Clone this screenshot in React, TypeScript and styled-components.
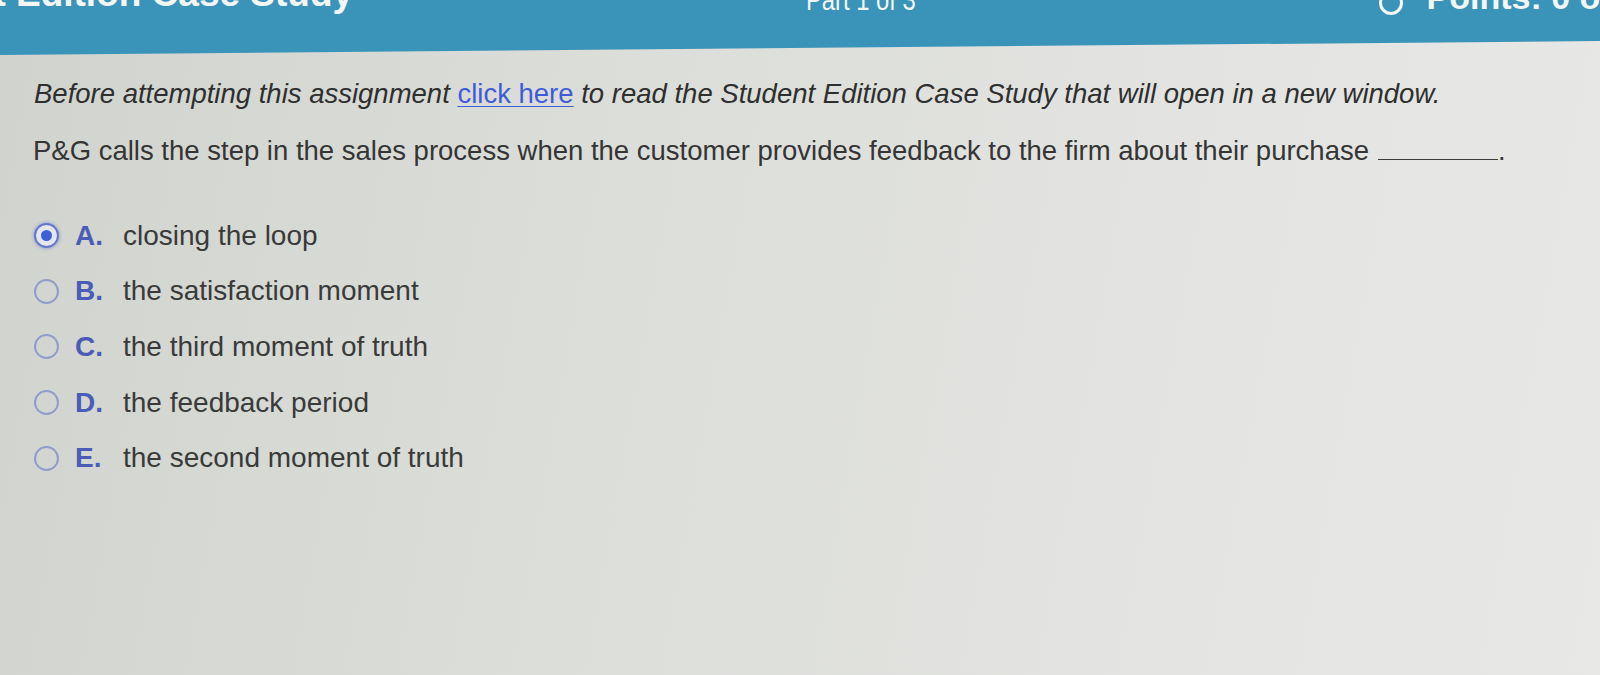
import React from 'react'
import styled, { createGlobalStyle } from 'styled-components'

const GlobalStyle = createGlobalStyle`
  html, body {
    margin: 0;
    padding: 0;
    width: 1600px;
    height: 675px;
    overflow: hidden;
  }
  body {
    font-family: 'Liberation Sans', Arial, sans-serif;
    background: linear-gradient(100deg, #d1d3cf 0%, #dbddd9 35%, #e3e4e1 70%, #e8e8e6 100%);
  }
`

const Page = styled.div`
  display: flex;
  flex-direction: column;
  width: 1600px;
  height: 675px;
`

const Header = styled.header`
  height: 56px;
  background: #3a94b9;
  clip-path: polygon(0 0, 100% 0, 100% 41px, 0 55px);
  display: flex;
  align-items: flex-start;
  color: #f4f6f6;
  overflow: hidden;
`

const HeaderRow = styled.div`
  display: flex;
  align-items: baseline;
  width: 100%;
  margin-top: -27px;
  height: 40px;
`

const Title = styled.div`
  font: 700 37px 'Liberation Sans', Arial, sans-serif;
  margin-left: -132px;
  white-space: nowrap;
`

const PartLabel = styled.div`
  font: 400 29px 'Liberation Sans', Arial, sans-serif;
  margin-left: 453px;
  transform: translateY(4px) scaleX(0.82);
  transform-origin: left;
  white-space: nowrap;
`

const Points = styled.div`
  display: flex;
  align-items: baseline;
  gap: 24px;
  margin-left: auto;
  margin-right: -40px;
  transform: translateY(3px);
  font: 700 34px 'Liberation Sans', Arial, sans-serif;
  white-space: nowrap;
`

const Ring = styled.span`
  box-sizing: border-box;
  display: inline-block;
  width: 24px;
  height: 24px;
  border: 3px solid #f4f6f6;
  border-radius: 50%;
  position: relative;
  top: 6px;
`

const Content = styled.main`
  display: flex;
  flex-direction: column;
  padding: 22px 0 0 34px;
  color: #353535;
`

const Intro = styled.p`
  margin: 0;
  font: italic 400 27.5px 'Liberation Sans', Arial, sans-serif;
  line-height: 32px;
  color: #2f2f2f;
  white-space: nowrap;
  a {
    color: #3f5bd8;
    text-decoration: underline;
    text-underline-offset: 3px;
    text-decoration-thickness: 1px;
    font-style: normal;
  }
`

const Question = styled.p`
  margin: 25px 0 0 -1px;
  font: 400 27.5px 'Liberation Sans', Arial, sans-serif;
  line-height: 32px;
  color: #353535;
  white-space: nowrap;
`

const Blank = styled.span`
  display: inline-block;
  width: 120px;
  border-bottom: 1.5px solid #3c3c3c;
  margin-left: 9px;
  vertical-align: baseline;
  height: 1px;
`

const Options = styled.div`
  display: flex;
  flex-direction: column;
  margin-top: 41px;
`

const Option = styled.label`
  display: flex;
  align-items: center;
  height: 55.6px;
  font: 400 28px 'Liberation Sans', Arial, sans-serif;
  color: #3a3a3a;
`

const Radio = styled.span<{ $checked?: boolean }>`
  box-sizing: border-box;
  width: 25px;
  height: 25px;
  border-radius: 50%;
  border: 2.5px solid ${(p) => (p.$checked ? '#6477c9' : '#909dc6')};
  background: ${(p) => (p.$checked ? '#e3e6ef' : 'transparent')};
  box-shadow: ${(p) => (p.$checked ? '0 0 3px 1px rgba(120,140,210,0.55)' : 'none')};
  display: flex;
  align-items: center;
  justify-content: center;
  &::after {
    content: '';
    width: 11px;
    height: 11px;
    border-radius: 50%;
    background: #3e60d4;
    display: ${(p) => (p.$checked ? 'block' : 'none')};
  }
`

const Letter = styled.span`
  font-weight: 700;
  color: #4a5cb6;
  width: 48px;
  margin-left: 16px;
`

const options = [
  { letter: 'A.', text: 'closing the loop' },
  { letter: 'B.', text: 'the satisfaction moment' },
  { letter: 'C.', text: 'the third moment of truth' },
  { letter: 'D.', text: 'the feedback period' },
  { letter: 'E.', text: 'the second moment of truth' },
]

export default function App() {
  return (
    <Page>
      <GlobalStyle />
      <Header>
        <HeaderRow>
          <Title>Student Edition Case Study</Title>
          <PartLabel>Part 1 of 3</PartLabel>
          <Points>
            <Ring />
            <span>Points: 0 of 1</span>
          </Points>
        </HeaderRow>
      </Header>
      <Content>
        <Intro>
          Before attempting this assignment <a href='#'>click here</a> to read the Student
          Edition Case Study that will open in a new window.
        </Intro>
        <Question>
          P&amp;G calls the step in the sales process when the customer provides feedback to the
          firm about their purchase
          <Blank />.
        </Question>
        <Options>
          {options.map((o, i) => (
            <Option key={o.letter}>
              <Radio $checked={i === 0} />
              <Letter>{o.letter}</Letter>
              <span>{o.text}</span>
            </Option>
          ))}
        </Options>
      </Content>
    </Page>
  )
}
